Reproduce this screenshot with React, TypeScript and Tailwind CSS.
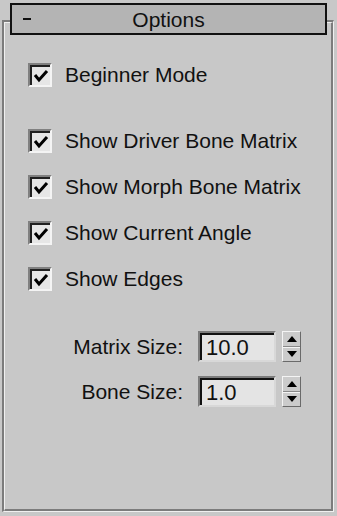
import type React from 'react';

const font = { fontFamily: '"Liberation Sans", Arial, sans-serif' };

const CheckBox: React.FC = () => (
    <div className="w-[24px] h-[24px] border-2 border-t-[#808080] border-l-[#808080] border-b-[#f4f4f4] border-r-[#f4f4f4] shrink-0">
        <div className="w-full h-full border-t-2 border-l-2 border-t-[#202020] border-l-[#202020] bg-[#e6e6e6] flex items-center justify-center">
            <svg width="16" height="14" viewBox="0 0 16 14">
                <path d="M2 6 L6 11 L14 2" fill="none" stroke="#000" strokeWidth="3" />
            </svg>
        </div>
    </div>
);

const CheckRow: React.FC<{ label: string }> = ({ label }) => (
    <div className="h-[46px] flex items-center gap-[13px] pl-[23px]">
        <CheckBox />
        <span className="text-[21px] text-[#111]">{label}</span>
    </div>
);

const Spinner: React.FC<{ label: string; value: string }> = ({ label, value }) => (
    <div className="h-[45px] flex items-center">
        <span className="w-[181px] text-right text-[21px] text-[#111] pr-[3px]">{label}</span>
        <div className="ml-[12px] w-[78px] h-[31px] border-t-2 border-l-2 border-t-[#7c7c7c] border-l-[#7c7c7c] border-b-2 border-r-2 border-b-[#d8d8d8] border-r-[#d8d8d8]">
            <div className="w-full h-full border-t-2 border-l-2 border-t-[#111] border-l-[#111] bg-[#e4e4e4] flex items-center pl-[4px] text-[22px] text-[#111] leading-none">
                {value}
            </div>
        </div>
        <div className="ml-[6px] w-[19px] h-[31px] flex flex-col border-t border-l border-t-[#f4f4f4] border-l-[#f4f4f4] border-b border-r border-b-[#6a6a6a] border-r-[#6a6a6a] bg-[#cbcbcb]">
            <div className="flex-1 flex items-center justify-center border-b border-b-[#8a8a8a]">
                <svg width="10" height="6" viewBox="0 0 10 6">
                    <path d="M0 6 L5 0 L10 6 Z" fill="#000" />
                </svg>
            </div>
            <div className="flex-1 flex items-center justify-center border-t border-t-[#f4f4f4]">
                <svg width="10" height="6" viewBox="0 0 10 6">
                    <path d="M0 0 L5 6 L10 0 Z" fill="#000" />
                </svg>
            </div>
        </div>
    </div>
);

export default function App() {
    return (
        <div className="w-[337px] h-[516px] bg-[#c8c8c8] relative pt-[20px] pl-[2px] pr-[3px] pb-[4px]" style={font}>
            <div className="h-full border-t-2 border-l-2 border-t-[#7c7c7c] border-l-[#7c7c7c] border-b border-r border-b-[#f0f0f0] border-r-[#f0f0f0]">
                <div className="h-full border-t border-l border-t-[#f0f0f0] border-l-[#f0f0f0] border-b-2 border-r-2 border-b-[#7c7c7c] border-r-[#7c7c7c] pt-[29px]">
                    <CheckRow label="Beginner Mode" />
                    <div className="h-[20px]" />
                    <CheckRow label="Show Driver Bone Matrix" />
                    <CheckRow label="Show Morph Bone Matrix" />
                    <CheckRow label="Show Current Angle" />
                    <CheckRow label="Show Edges" />
                    <div className="h-[22px]" />
                    <Spinner label="Matrix Size:" value="10.0" />
                    <Spinner label="Bone Size:" value="1.0" />
                </div>
            </div>
            <div className="absolute left-[10px] top-[3px] w-[317px] h-[32px] border-2 border-[#111] bg-[#b4b4b4] flex items-center">
                <div className="w-[8px] h-[2px] bg-[#111] ml-[11px]" />
                <span className="flex-1 text-center text-[21px] text-[#111] pr-[19px] leading-none">Options</span>
            </div>
        </div>
    );
}
